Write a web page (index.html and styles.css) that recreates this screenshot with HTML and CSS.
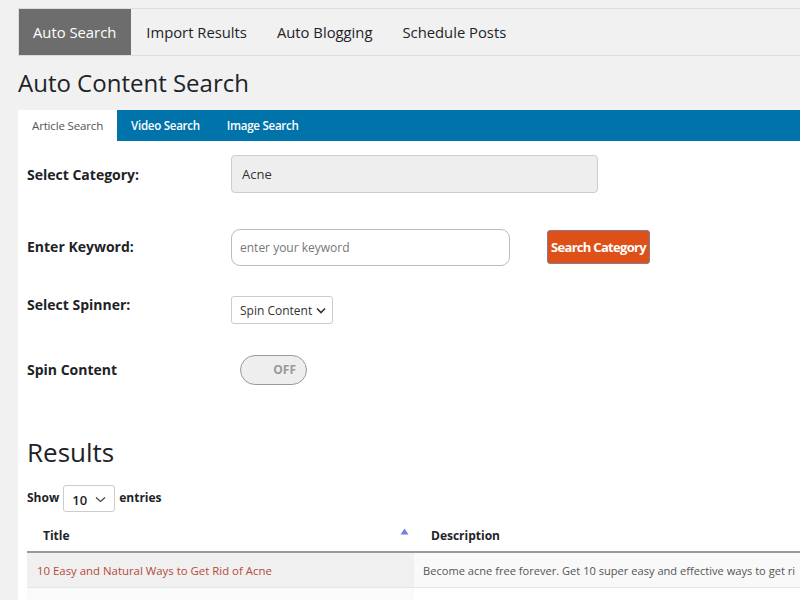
FILE: index.html
```html
<!DOCTYPE html>
<html>
<head>
<meta charset="utf-8">
<link rel="stylesheet" href="styles.css">
</head>
<body>
<div class="wrap">
  <nav class="topnav">
    <a class="topnav-item active">Auto Search</a>
    <a class="topnav-item">Import Results</a>
    <a class="topnav-item">Auto Blogging</a>
    <a class="topnav-item">Schedule Posts</a>
  </nav>
  <h1 class="page-title">Auto Content Search</h1>
  <div class="tabs">
    <a class="tab active">Article Search</a>
    <a class="tab">Video Search</a>
    <a class="tab">Image Search</a>
  </div>
  <div class="panel">
    <div class="form-row row-category">
      <label class="form-label">Select Category:</label>
      <div class="field-readonly">Acne</div>
    </div>
    <div class="form-row row-keyword">
      <label class="form-label">Enter Keyword:</label>
      <div class="field-keyword">enter your keyword</div>
      <button class="btn-search">Search Category</button>
    </div>
    <div class="form-row row-spinner">
      <label class="form-label">Select Spinner:</label>
      <div class="select-spinner">Spin Content
        <svg class="chev" width="10" height="7" viewBox="0 0 10 7"><path d="M1 1.5 L5 5.5 L9 1.5" fill="none" stroke="#333" stroke-width="1.6"/></svg>
      </div>
    </div>
    <div class="form-row row-toggle">
      <label class="form-label">Spin Content</label>
      <div class="toggle"><span class="toggle-text">OFF</span></div>
    </div>

    <h2 class="results-title">Results</h2>
    <div class="length">
      <span class="length-label">Show</span>
      <div class="length-select">10
        <svg class="chev" width="11" height="7" viewBox="0 0 11 7"><path d="M1 1.5 L5.5 5.5 L10 1.5" fill="none" stroke="#444" stroke-width="1.3"/></svg>
      </div>
      <span class="length-label">entries</span>
    </div>
    <div class="table">
      <div class="thead">
        <div class="th th-title">Title
          <svg class="sort" width="9" height="7" viewBox="0 0 9 7"><path d="M4.5 0.5 L8.5 6.5 L0.5 6.5 Z" fill="#7b7fd6"/></svg>
        </div>
        <div class="th th-desc">Description</div>
      </div>
      <div class="tr odd">
        <div class="td td-title"><a class="link">10 Easy and Natural Ways to Get Rid of Acne</a></div>
        <div class="td td-desc">Become acne free forever. Get 10 super easy and effective ways to get ri</div>
      </div>
      <div class="tr even">
        <div class="td td-title"></div>
        <div class="td td-desc"></div>
      </div>
    </div>
  </div>
</div>
</body>
</html>
```

FILE: styles.css
```css
html, body {
  margin: 0;
  padding: 0;
  overflow: hidden;
  background: #f1f1f1;
  font-family: "Open Sans", "Noto Sans", sans-serif;
  color: #1d2327;
}
.wrap {
  padding: 8px 0 0 18px;
  width: 782px;
  height: 592px;
  overflow: hidden;
}
.topnav {
  display: flex;
  border-top: 1px solid #dcdcdc;
  border-bottom: 1px solid #dcdcdc;
  height: 46px;
}
.topnav-item {
  display: flex;
  align-items: center;
  padding: 0 15px;
  font-size: 14.8px;
  color: #1d2327;
}
.topnav-item.active {
  background: #6d6d6d;
  color: #fff;
  border-left: 1px solid #dcdcdc;
  padding-left: 14px;
}
.page-title {
  margin: 0;
  height: 54px;
  font-size: 24px;
  font-weight: 500;
  line-height: 54px;
  color: #1d2327;
}
.tabs {
  display: flex;
  background: #0073aa;
  height: 31px;
}
.tab {
  display: flex;
  align-items: center;
  padding: 0 13px 0 14px;
  font-size: 11.6px;
  font-weight: 600;
  letter-spacing: -0.3px;
  color: #fff;
}
.tab.active {
  background: #fff;
  color: #555;
  font-weight: 400;
  padding: 0 14px;
  letter-spacing: -0.2px;
}
.panel {
  background: #fff;
  padding: 14px 0 0 9px;
  height: 600px;
}
.form-row {
  display: flex;
  align-items: center;
}
.form-label {
  flex-shrink: 0;
  width: 204px;
  font-size: 14px;
  font-weight: 700;
  color: #1d2327;
}
.row-category { height: 38px; }
.field-readonly {
  box-sizing: border-box;
  width: 367px;
  height: 38px;
  background: #eee;
  border: 1px solid #ccc;
  border-radius: 4px;
  padding: 0 10px;
  display: flex;
  align-items: center;
  font-size: 13px;
  color: #333;
}
.row-keyword { margin-top: 36px; height: 37px; }
.row-keyword .form-label { margin-top: -2px; }
.field-keyword {
  box-sizing: border-box;
  width: 279px;
  height: 37px;
  border: 1px solid #bbb;
  border-radius: 9px;
  padding: 0 8px;
  display: flex;
  align-items: center;
  font-size: 12px;
  color: #777;
}
.btn-search {
  margin-left: 37px;
  height: 34px;
  padding: 0;
  width: 103px;
  background: #dd5119;
  border: 1px solid #8a7a9a;
  border-radius: 3px;
  color: #fff;
  font-family: inherit;
  font-size: 13px;
  font-weight: 700;
  letter-spacing: -0.7px;
  white-space: nowrap;
  margin-top: -2px;
}
.row-spinner { margin-top: 30px; height: 28px; }
.row-spinner .form-label { margin-top: -12px; }
.select-spinner {
  box-sizing: border-box;
  width: 102px;
  height: 28px;
  border: 1px solid #ccc;
  border-radius: 3px;
  padding: 0 6px 0 8px;
  display: flex;
  align-items: center;
  justify-content: space-between;
  font-size: 12px;
  color: #333;
}
.row-toggle { margin-top: 31px; height: 30px; }
.row-toggle .form-label { margin-top: -2px; }
.toggle {
  box-sizing: border-box;
  margin-left: 9px;
  width: 67px;
  height: 30px;
  border: 1px solid #9a9a9a;
  border-radius: 15px;
  background: #eee;
  display: flex;
  align-items: center;
  justify-content: flex-end;
  padding-right: 10px;
}
.toggle-text {
  font-size: 12px;
  font-weight: 700;
  color: #999;
  margin-top: -2px;
}
.results-title {
  margin: 50px 0 0 0;
  font-size: 26px;
  font-weight: 400;
  line-height: 34px;
  color: #1d2327;
}
.length {
  margin-top: 16px;
  display: flex;
  align-items: center;
  gap: 4px;
  font-size: 12px;
}
.length-label { font-weight: 700; color: #1d2327; margin-top: -3px; }
.length-select {
  box-sizing: border-box;
  width: 52px;
  height: 27px;
  border: 1px solid #ccc;
  border-radius: 3px;
  padding: 2px 8px 0 8px;
  display: flex;
  align-items: center;
  justify-content: space-between;
  font-size: 13px;
  font-weight: 600;
  color: #1d2327;
}
.table {
  margin-top: 7px;
  width: 773px;
  font-size: 11.4px;
}
.thead {
  display: flex;
  height: 32px;
  border-bottom: 2px solid #999;
}
.th {
  display: flex;
  align-items: center;
  font-weight: 700;
  color: #1d2327;
  font-size: 12px;
}
.th-title {
  flex-shrink: 0;
  width: 387px;
  box-sizing: border-box;
  padding: 0 5px 0 16px;
  justify-content: space-between;
}
.sort {
  margin-top: -8px;
}
.th-desc { padding-left: 17px; }
.tr {
  display: flex;
  height: 34px;
  border-bottom: 1px solid #e6e6e6;
}
.td {
  display: flex;
  align-items: center;
  white-space: nowrap;
  overflow: hidden;
}
.td-title {
  flex-shrink: 0;
  width: 387px;
  box-sizing: border-box;
  padding-left: 10px;
}
.td-desc {
  padding-left: 9px;
  color: #555;
  flex: 1;
  font-size: 11.1px;
}
.odd .td-title { background: #f0f0f0; }
.odd .td-desc { background: #f9f9f9; }
.even .td-title { background: #fafafa; }
.link { color: #b54a3a; }
```
